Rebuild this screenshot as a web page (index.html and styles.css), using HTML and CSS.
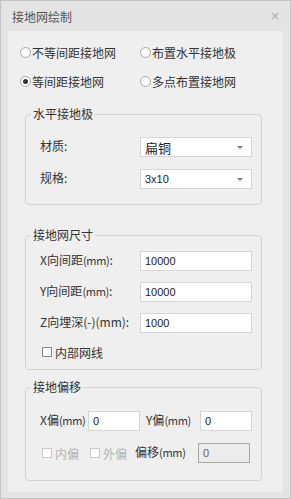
FILE: index.html
```html
<!DOCTYPE html>
<html lang="zh-CN">
<head>
  <meta charset="UTF-8" />
  <title>接地网绘制</title>
  <link rel="stylesheet" href="styles.css">
</head>
<body>
  <div class="dialog">
    <div class="titlebar">
      <span class="title">接地网绘制</span>
      <svg class="close" width="8" height="8" viewBox="0 0 8 8">
        <path d="M1 1L7 7M7 1L1 7" stroke="#b4b4b4" stroke-width="1.4" />
      </svg>
    </div>

    <div class="panel">
      <div class="modes">
        <label class="radio"><span class="dot"></span>不等间距接地网</label>
        <label class="radio"><span class="dot"></span>布置水平接地极</label>
        <label class="radio"><span class="dot checked"></span>等间距接地网</label>
        <label class="radio"><span class="dot"></span>多点布置接地网</label>
      </div>

      <fieldset class="group group-rod">
        <legend>水平接地极</legend>
        <div class="row">
          <span class="label">材质:</span>
          <div class="select big">扁铜<span class="caret"></span></div>
        </div>
        <div class="row">
          <span class="label">规格:</span>
          <div class="select">3x10<span class="caret"></span></div>
        </div>
      </fieldset>

      <fieldset class="group group-size">
        <legend>接地网尺寸</legend>
        <div class="row">
          <span class="label">X向间距<span class="mm">(mm)</span>:</span>
          <div class="input">10000</div>
        </div>
        <div class="row">
          <span class="label">Y向间距<span class="mm">(mm)</span>:</span>
          <div class="input">10000</div>
        </div>
        <div class="row">
          <span class="label">Z向埋深(-)(mm):</span>
          <div class="input">1000</div>
        </div>
        <label class="check"><span class="box"></span>内部网线</label>
      </fieldset>

      <fieldset class="group group-offset">
        <legend>接地偏移</legend>
        <div class="row">
          <span class="olabel w48">X偏<span class="mm">(mm)</span></span>
          <div class="input small">0</div>
          <span class="olabel w54">Y偏<span class="mm">(mm)</span></span>
          <div class="input small">0</div>
        </div>
        <div class="row">
          <label class="check disabled w48"><span class="box"></span>内偏</label>
          <label class="check disabled w47"><span class="box"></span>外偏</label>
          <span class="olabel w63">偏移<span class="mm">(mm)</span></span>
          <div class="input small off">0</div>
        </div>
      </fieldset>
    </div>
  </div>
</body>
</html>
```

FILE: styles.css
```css
body, html {
  margin: 0;
  padding: 0;
  font-family: "Noto Sans CJK SC", "Noto Sans", sans-serif;
  font-size: 12px;
  color: #333;
}
.dialog {
  width: 291px;
  height: 499px;
  box-sizing: border-box;
  border: 1px solid #c4c4c4;
  background: #e4e4e4;
  display: flex;
  flex-direction: column;
}
.titlebar {
  height: 30px;
  flex: none;
  display: flex;
  align-items: center;
  justify-content: space-between;
  padding: 0 11px 0 11px;
}
.title {
  color: #555;
  font-size: 12px;
}
.panel {
  flex: 1;
  margin: 0 7px 6px 7px;
  background: #efefef;
  padding: 11px 0 0 0;
}
.modes {
  display: grid;
  grid-template-columns: 120px 120px;
  row-gap: 9px;
  padding-left: 12px;
}
.radio {
  display: flex;
  align-items: center;
  height: 20px;
  gap: 1px;
}
.dot {
  width: 11px;
  height: 11px;
  border: 1px solid #a6a6a6;
  border-radius: 50%;
  background: #fff;
  box-sizing: border-box;
  display: flex;
  align-items: center;
  justify-content: center;
}
.dot.checked::after {
  content: "";
  width: 5px;
  height: 5px;
  border-radius: 50%;
  background: #333;
}
.group {
  margin: 0 21px 0 17px;
  border: 1px solid #d2d2d2;
  border-radius: 4px;
  padding: 0 9px 0 14px;
  min-width: 0;
}
.group legend {
  padding: 0 2px;
  margin-left: -9px;
  line-height: 16px;
  font-size: 12px;
}
.group-rod {
  margin-top: 15px;
  padding-top: 15px;
  padding-bottom: 15px;
}
.group-size {
  margin-top: 22px;
  padding-top: 8px;
  padding-bottom: 9px;
}
.group-offset {
  margin-top: 9px;
  padding-top: 16px;
  padding-bottom: 17px;
}
.row {
  display: flex;
  align-items: center;
}
.group-rod .row + .row {
  margin-top: 12px;
}
.group-size .row + .row {
  margin-top: 11px;
}
.group-offset .row + .row {
  margin-top: 12px;
}
.label {
  width: 100px;
  flex: none;
  margin-top: -3px;
  white-space: nowrap;
}
.mm {
  font-size: 11px;
  letter-spacing: -0.3px;
}
.select, .input {
  width: 112px;
  height: 20px;
  box-sizing: border-box;
  background: #fff;
  border: 1px solid #d6d6d6;
  display: flex;
  align-items: center;
  padding: 0 4px;
  font-family: "Liberation Sans", Arial, sans-serif;
  font-size: 11px;
  color: #222;
  position: relative;
}
.select.big {
  font-family: "Noto Sans CJK SC", sans-serif;
  font-size: 13px;
}
.caret {
  position: absolute;
  right: 8px;
  top: 8px;
  border-left: 3px solid transparent;
  border-right: 3px solid transparent;
  border-top: 3px solid #777;
}
.check {
  display: flex;
  align-items: center;
  gap: 3px;
  height: 16px;
  margin-top: 11px;
  padding-left: 2px;
  white-space: nowrap;
}
.box {
  width: 10px;
  height: 10px;
  box-sizing: border-box;
  border: 1px solid #8c8c8c;
  background: #fff;
  flex: none;
}
.group-offset .check {
  margin-top: 0;
}
.check.disabled {
  color: #b3b3b3;
}
.check.disabled .box {
  border-color: #c8c8c8;
}
.olabel {
  flex: none;
  margin-top: -4px;
  white-space: nowrap;
}
.input.small {
  width: 52px;
  flex: none;
}
.input.off {
  background: #ececec;
  border-color: #a9a9a9;
  color: #666;
}
.w48 { width: 48px; flex: none; box-sizing: border-box; }
.w47 { width: 47px; flex: none; box-sizing: border-box; }
.w54 { width: 54px; margin-left: 6px; }
.w63 { width: 63px; }
```
